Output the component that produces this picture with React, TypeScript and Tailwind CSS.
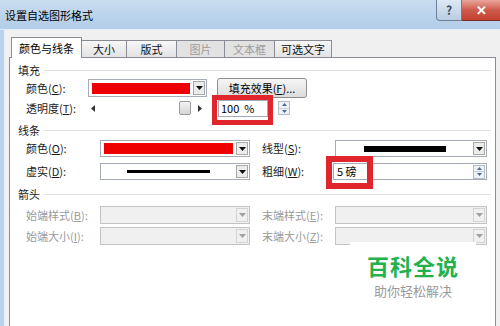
const font = { fontFamily: '"Noto Sans CJK SC", "Microsoft YaHei", sans-serif' };

type DropProps = {
  w: string;
  fill?: "red" | "thick" | "thin";
  disabled?: boolean;
  inset?: string;
};

const Arrow = ({ disabled }: { disabled?: boolean }) => (
  <div
    className={`w-[12px] self-stretch my-[1px] mr-[1px] flex items-center justify-center border ${
      disabled ? "border-[#d4d4d4] bg-[#f0f0f0]" : "border-[#a8a8a8] bg-[#ececec]"
    }`}
  >
    <svg width="7" height="4" viewBox="0 0 7 4">
      <path d="M0 0h7L3.5 4z" fill={disabled ? "#a0a0a0" : "#111"} />
    </svg>
  </div>
);

const Dropdown = ({ w, fill, disabled, inset = "px-[3px]" }: DropProps) => (
  <div
    className={`${w} h-full flex items-stretch border ${
      disabled ? "border-[#c4c4c4] bg-[#f0f0f0]" : "border-[#a5acb5] bg-white"
    }`}
  >
    <div className={`flex-1 flex items-center ${inset}`}>
      {fill === "red" && <div className="w-full h-[11px] bg-[#ee0000]" />}
      {fill === "thick" && (
        <div className="flex-1 flex justify-center">
          <div className="w-[82px] h-[6px] bg-black" />
        </div>
      )}
      {fill === "thin" && (
        <div className="flex-1 flex justify-center">
          <div className="w-[83px] h-[3px] bg-black" />
        </div>
      )}
    </div>
    <Arrow disabled={disabled} />
  </div>
);

const Spin = () => (
  <div className="w-[12px] h-[14px] flex flex-col border border-[#b4bcc6] bg-[#eef2f7]">
    <div className="flex-1 flex items-center justify-center border-b border-[#c8cfd8]">
      <svg width="5" height="3" viewBox="0 0 5 3">
        <path d="M0 3h5L2.5 0z" fill="#4a6a96" />
      </svg>
    </div>
    <div className="flex-1 flex items-center justify-center">
      <svg width="5" height="3" viewBox="0 0 5 3">
        <path d="M0 0h5L2.5 3z" fill="#4a6a96" />
      </svg>
    </div>
  </div>
);

const Section = ({ title, mt }: { title: string; mt: string }) => (
  <div className={`${mt} h-[14px] pl-[8px] pr-[4px] flex items-center gap-[4px]`}>
    <span className="text-[11px] leading-none text-[#1a1a1a]">{title}</span>
    <div className="flex-1 h-px bg-[#dfe3e8]" />
  </div>
);

const Label = ({ text, k, w, gray }: { text: string; k: string; w: string; gray?: boolean }) => (
  <span className={`${w} text-[11px] leading-none ${gray ? "text-[#9a9a9a]" : "text-[#1a1a1a]"}`}>
    {text}(<u>{k}</u>):
  </span>
);

const tabs = [
  { name: "大小", w: "w-[45px]" },
  { name: "版式", w: "w-[50px]" },
  { name: "图片", w: "w-[48px]", off: true },
  { name: "文本框", w: "w-[50px]", off: true },
  { name: "可选文字", w: "w-[57px]" },
];

export default function App() {
  return (
    <div className="w-[500px] h-[326px] overflow-hidden flex flex-col bg-[#f0f0f0]" style={font}>
      {/* title bar */}
      <div className="h-[30px] flex items-start bg-gradient-to-b from-[#c9ddf1] via-[#bcd4ed] to-[#b2cde8] border-b border-[#e4edf6]">
        <span className="pl-[5px] pt-[10px] text-[11px] leading-none text-black">设置自选图形格式</span>
        <div className="ml-auto flex h-[21px]">
          <div className="w-[26px] flex items-center justify-center border border-t-0 border-[#6d7f98] rounded-bl-[4px] bg-gradient-to-b from-[#dde9f5] to-[#b9cde3] text-[12px] font-bold text-[#3b4b63]">
            ?
          </div>
          <div className="w-[38px] flex items-center justify-center border-b border-[#7a2b25] bg-gradient-to-b from-[#e8a49b] via-[#cf5a4c] to-[#c3402f] text-white text-[13px] font-bold">
            ✕
          </div>
        </div>
      </div>

      <div className="flex-1 flex">
        <div className="w-[4px] bg-[#b7d2ec]" />
        <div className="w-px bg-[#e8eef4]" />
        <div className="flex-1 flex flex-col pl-[4px] pr-[4px]">
          {/* tabs */}
          <div className="h-[27px] flex items-end pl-[2px] relative z-10">
            <div className="w-[71px] h-[21px] -mb-px flex items-center justify-center bg-white border border-b-0 border-[#898c95] text-[11px] leading-none">
              颜色与线条
            </div>
            {tabs.map((t) => (
              <div
                key={t.name}
                className={`${t.w} h-[17px] flex items-center justify-center border border-l-0 border-b-0 border-[#898c95] text-[11px] leading-none ${
                  t.off
                    ? "bg-[#e2e2e2] text-[#9b9b9b]"
                    : "bg-gradient-to-b from-[#f7f7f7] to-[#e3e3e3] text-[#111]"
                }`}
              >
                {t.name}
              </div>
            ))}
          </div>

          {/* panel */}
          <div className="flex-1 bg-white border border-b-0 border-[#898c95] flex flex-col relative">
            <Section title="填充" mt="mt-[5px]" />

            <div className="mt-[2px] h-[18px] pl-[16px] flex items-center">
              <Label text="颜色" k="C" w="w-[62px]" />
              <Dropdown w="w-[119px]" fill="red" />
              <div className="ml-[10px] w-[90px] h-[20px] flex items-center justify-center border border-[#8e8f8f] rounded-[3px] bg-gradient-to-b from-[#f6f6f6] to-[#dcdcdc] text-[11px] leading-none">
                填充效果(<u>F</u>)...
              </div>
            </div>

            <div className="mt-[2px] h-[18px] pl-[16px] flex items-center">
              <Label text="透明度" k="T" w="w-[62px]" />
              <div className="w-[117px] h-[16px] flex items-center gap-[3px] px-[3px]">
                <svg width="4" height="7" viewBox="0 0 4 7">
                  <path d="M4 0v7L0 3.5z" fill="#333" />
                </svg>
                <div className="flex-1 h-full flex items-center justify-end">
                  <div className="w-[12px] h-[14px] border border-[#9a9a9a] rounded-[2px] bg-gradient-to-b from-[#f4f4f4] to-[#d6d6d6]" />
                </div>
                <svg width="4" height="7" viewBox="0 0 4 7" className="ml-[4px]">
                  <path d="M0 0v7L4 3.5z" fill="#333" />
                </svg>
              </div>
              <div className="ml-[13px] relative w-[50px] h-[17px] border border-[#a5acb5] flex items-center pl-[2px] text-[11px] leading-none whitespace-pre">
                100  %
                <div className="absolute left-[-7px] top-[-6px] right-[-6px] bottom-[-9px] border-[5px] border-[#e0262c]" />
              </div>
              <div className="ml-[10px]">
                <Spin />
              </div>
            </div>

            <Section title="线条" mt="mt-[6px]" />

            <div className="mt-[3px] h-[17px] pl-[16px] flex items-center">
              <Label text="颜色" k="O" w="w-[74px]" />
              <Dropdown w="w-[150px]" fill="red" />
              <Label text="线型" k="S" w="ml-[12px] w-[73px]" />
              <Dropdown w="w-[152px]" fill="thick" />
            </div>

            <div className="mt-[6px] h-[17px] pl-[16px] flex items-center">
              <Label text="虚实" k="D" w="w-[74px]" />
              <Dropdown w="w-[150px]" fill="thin" />
              <Label text="粗细" k="W" w="ml-[12px] w-[71px]" />
              <div className="relative w-[154px] h-full border border-[#a5acb5] flex items-center justify-between pl-[3px] pr-[1px] text-[11px] leading-none">
                <span>5 磅</span>
                <Spin />
                <div className="absolute left-[-8px] top-[-8px] w-[47px] bottom-[-10px] border-[6px] border-[#e0262c]" />
              </div>
            </div>

            <Section title="箭头" mt="mt-[7px]" />

            <div className="mt-[5px] h-[18px] pl-[16px] flex items-center">
              <Label text="始端样式" k="B" w="w-[74px]" gray />
              <Dropdown w="w-[150px]" disabled />
              <Label text="末端样式" k="E" w="ml-[12px] w-[73px]" gray />
              <Dropdown w="w-[152px]" disabled />
            </div>

            <div className="mt-[3px] h-[18px] pl-[16px] flex items-center">
              <Label text="始端大小" k="I" w="w-[74px]" gray />
              <Dropdown w="w-[150px]" disabled />
              <Label text="末端大小" k="Z" w="ml-[12px] w-[73px]" gray />
              <Dropdown w="w-[152px]" disabled />
            </div>

            {/* watermark */}
            <div className="absolute left-[340px] top-[184px] w-[126px] h-[62px] bg-white flex flex-col items-center pt-[7px]">
              <span className="text-[22px] leading-[32px] font-bold text-[#22b14c] tracking-[1px]">百科全说</span>
              <span className="text-[13px] leading-[19px] text-[#9a9a9a]">助你轻松解决</span>
            </div>
          </div>
        </div>
      </div>
    </div>
  );
}
